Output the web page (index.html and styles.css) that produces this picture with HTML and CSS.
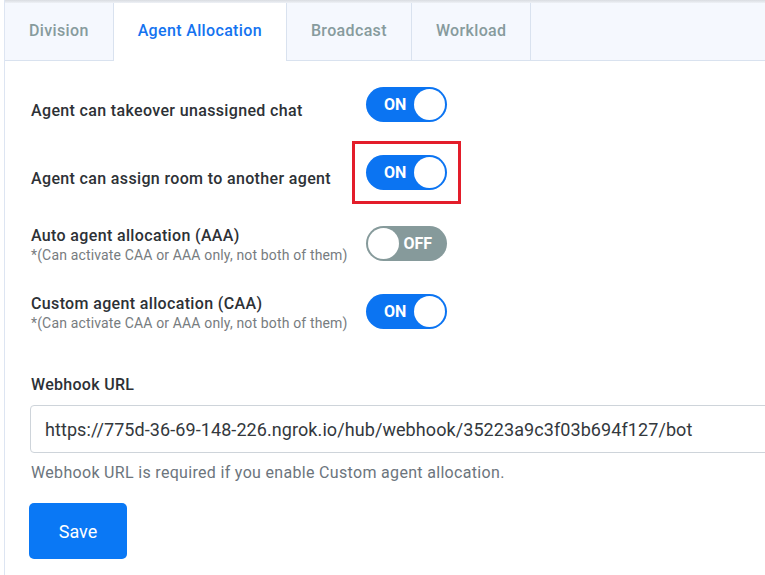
FILE: index.html
```html
<!DOCTYPE html>
<html lang="en">
<head>
  <meta charset="UTF-8">
  <title>Settings - Agent Allocation</title>
  <link rel="stylesheet" href="styles.css">
</head>
<body>

<div class="panel">
  <ul class="tabs">
    <li>Division</li>
    <li class="active">Agent Allocation</li>
    <li>Broadcast</li>
    <li>Workload</li>
  </ul>

  <div class="tab-body">
    <div class="setting-row">
      <div class="setting-label">Agent can takeover unassigned chat</div>
      <span class="switch on"><span class="switch-text">ON</span><span class="knob"></span></span>
    </div>

    <div class="setting-row highlight">
      <div class="setting-label">Agent can assign room to another agent</div>
      <span class="switch-frame">
        <span class="switch on"><span class="switch-text">ON</span><span class="knob"></span></span>
      </span>
    </div>

    <div class="setting-row with-note">
      <div class="setting-label">
        Auto agent allocation (AAA)
        <div class="note">*(Can activate CAA or AAA only, not both of them)</div>
      </div>
      <span class="switch off"><span class="knob"></span><span class="switch-text">OFF</span></span>
    </div>

    <div class="setting-row with-note">
      <div class="setting-label">
        Custom agent allocation (CAA)
        <div class="note">*(Can activate CAA or AAA only, not both of them)</div>
      </div>
      <span class="switch on"><span class="switch-text">ON</span><span class="knob"></span></span>
    </div>

    <div class="field">
      <label class="field-label" for="webhook">Webhook URL</label>
      <input type="text" id="webhook" class="field-input" value="https://775d-36-69-148-226.ngrok.io/hub/webhook/35223a9c3f03b694f127/bot">
      <p class="field-help">Webhook URL is required if you enable Custom agent allocation.</p>
    </div>

    <button class="btn-save">Save</button>
  </div>
</div>

</body>
</html>
```

FILE: styles.css
```css
html, body {
  margin: 0;
  padding: 0;
  overflow: hidden;
}
body {
  font-family: Roboto, 'Liberation Sans', sans-serif;
  background: #fff;
  color: #2d3136;
  width: 765px;
  height: 575px;
}
.panel {
  margin-left: 4px;
  border-left: 1px solid #dde5f2;
  height: 575px;
  overflow: hidden;
}
.panel::before {
  content: "";
  display: block;
  height: 3px;
  margin-left: -5px;
  background: linear-gradient(#d9dce1, #eef1f6);
}
.tabs {
  display: flex;
  margin: 0;
  padding: 0;
  list-style: none;
  height: 57px;
  background: #f5f8fe;
  border-bottom: 1px solid #d9e2ef;
}
.tabs li {
  padding: 0 24px;
  line-height: 55px;
  font-size: 16px;
  font-weight: 500;
  letter-spacing: 0.35px;
  color: #879b9d;
  border-right: 1px solid #d9e2ef;
}
.tabs li.active {
  background: #fff;
  color: #1473f0;
  height: 58px;
}
.tab-body {
  padding: 24px 26px 0;
}
.setting-row {
  display: grid;
  grid-template-columns: 335px auto;
  align-items: center;
  min-height: 38px;
  margin-bottom: 30px;
}
.setting-row.highlight {
  margin-bottom: 31px;
}
.setting-row.with-note {
  margin-bottom: 26px;
}
.setting-label {
  padding-top: 14px;
  font-size: 16px;
  font-weight: 500;
  letter-spacing: 0.35px;
  line-height: 20px;
  color: #2d3136;
}
.with-note .setting-label {
  padding-top: 4px;
}
.note {
  font-size: 14px;
  font-weight: 400;
  letter-spacing: 0.15px;
  line-height: 18px;
  color: #777c80;
}
.switch-frame {
  display: flex;
  justify-self: start;
  outline: 3px solid #e31d2a;
  outline-offset: 11px;
}
.switch {
  display: flex;
  align-items: center;
  justify-content: space-between;
  width: 81px;
  height: 35px;
  box-sizing: border-box;
  padding: 2px;
  border-radius: 18px;
  justify-self: start;
}
.switch.on {
  background: #0b74f2;
}
.switch.off {
  background: #869a9b;
}
.switch-text {
  color: #fff;
  font-size: 16px;
  font-weight: 700;
}
.switch.on .switch-text {
  padding-left: 16px;
}
.switch.off .switch-text {
  padding-right: 13px;
}
.knob {
  width: 31px;
  height: 31px;
  border-radius: 50%;
  background: #fff;
}
.field {
  margin-top: 43px;
}
.field-label {
  display: block;
  font-size: 16px;
  font-weight: 500;
  letter-spacing: 0.3px;
  line-height: 20px;
  margin-bottom: 10px;
}
.field-input {
  display: block;
  width: 780px;
  height: 48px;
  margin-left: -1px;
  box-sizing: border-box;
  padding: 0 14px;
  border: 1px solid #ced4da;
  border-radius: 4px;
  font-family: Roboto, 'Liberation Sans', sans-serif;
  font-size: 18px;
  letter-spacing: 0.08px;
  color: #33383d;
}
.field-help {
  margin: 10px 0 20px;
  font-size: 16px;
  letter-spacing: 0.32px;
  line-height: 20px;
  color: #6c757d;
}
.btn-save {
  width: 98px;
  height: 56px;
  margin-left: -2px;
  border: none;
  border-radius: 5px;
  background: #0a78f5;
  color: #fff;
  font-family: Roboto, 'Liberation Sans', sans-serif;
  font-size: 18px;
  cursor: pointer;
}
```
